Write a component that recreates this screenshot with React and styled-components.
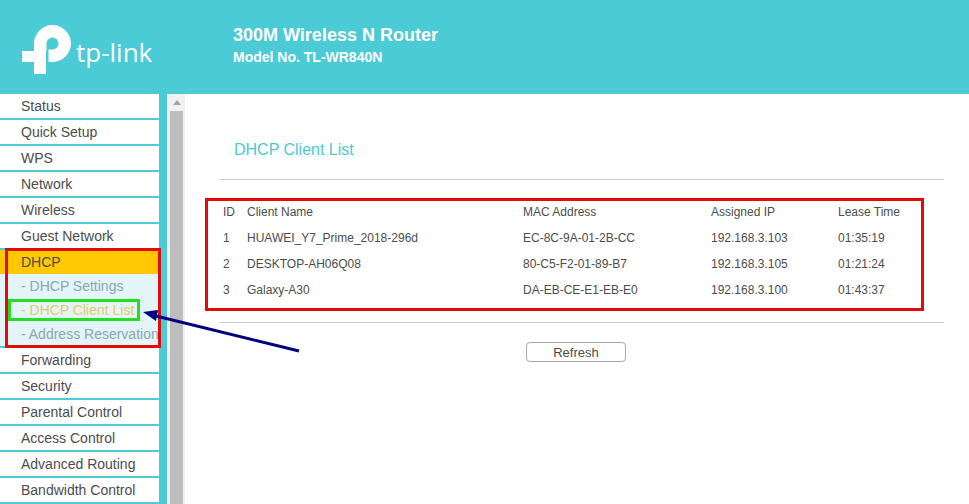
import React from 'react';
import styled, { createGlobalStyle } from 'styled-components';

const GlobalStyle = createGlobalStyle`
  html, body {
    margin: 0;
    height: 100%;
    overflow: hidden;
    background: #fff;
  }
  body {
    font-family: "Liberation Sans", Arial, sans-serif;
    color: #4c4c4c;
  }
`;

const Page = styled.div`
  position: relative;
  width: 969px;
  height: 504px;
  overflow: hidden;
`;

const Header = styled.header`
  height: 94px;
  background: #4acbd6;
  display: flex;
  color: #fff;
`;

const Brand = styled.div`
  width: 233px;
  padding: 25px 0 0 22px;
  box-sizing: border-box;
  display: flex;
  align-items: flex-start;
`;

const Wordmark = styled.span`
  font-family: "Open Sans", sans-serif;
  font-weight: 400;
  font-size: 26px;
  line-height: 30px;
  margin: 12px 0 0 4px;
`;

const Product = styled.div`
  padding-top: 24px;
  font-weight: bold;
`;

const ProductName = styled.div`
  font-size: 18px;
  line-height: 22px;
`;

const ModelNo = styled.div`
  font-size: 14px;
  line-height: 22px;
`;

const Body = styled.div`
  display: flex;
  height: 410px;
`;

const Menu = styled.nav`
  width: 159px;
  border-right: 8px solid #4acbd6;
  flex: none;
  background: #4acbd6;
`;

const MenuItem = styled.div`
  height: 24px;
  line-height: 24px;
  padding-left: 21px;
  font-size: 14px;
  background: ${p => (p.$open ? '#ffc800' : '#fff')};
  margin-bottom: ${p => (p.$open ? 0 : '2px')};
`;

const SubMenu = styled.div`
  background: #e3f5f8;
  margin-bottom: 2px;
`;

const SubItem = styled.div`
  height: 24px;
  line-height: 24px;
  padding-left: 21px;
  font-size: 14px;
  white-space: nowrap;
  overflow: hidden;
  color: ${p => (p.$active ? '#e2cc62' : '#8ba6ae')};
`;

const Scrollbar = styled.div`
  width: 17px;
  margin-left: 1px;
  flex: none;
  background: #f1f1f1;
  display: flex;
  flex-direction: column;
  align-items: center;
`;

const ScrollArrow = styled.div`
  height: 17px;
  width: 17px;
  display: flex;
  align-items: center;
  justify-content: center;
  &::before {
    content: '';
    border-left: 4px solid transparent;
    border-right: 4px solid transparent;
    border-bottom: 5px solid #a3a3a3;
  }
`;

const ScrollThumb = styled.div`
  width: 13px;
  flex: 1;
  background: #bdbdbd;
`;

const Content = styled.main`
  flex: 1;
  padding: 0 25px 0 34px;
`;

const Title = styled.h1`
  margin: 0;
  padding: 45px 0 0 15px;
  height: 40px;
  font-size: 16px;
  line-height: 22px;
  font-weight: normal;
  color: #4acbd6;
`;

const Rule = styled.hr`
  margin: 0;
  border: 0;
  height: 1px;
  background: #cccccc;
`;

const ClientTable = styled.table`
  border-collapse: collapse;
  table-layout: fixed;
  margin: 19px 0 19px 4px;
  width: 720px;
  font-size: 12px;
  th, td {
    height: 26px;
    padding: 0;
    font-weight: normal;
    text-align: left;
  }
`;

const Actions = styled.div`
  padding: 19px 0 0 307px;
`;

const RefreshButton = styled.button`
  display: block;
  width: 100px;
  height: 20px;
  padding: 0;
  background: #fff;
  border: 1px solid #a8a8a8;
  border-radius: 4px;
  font-family: inherit;
  font-size: 13px;
  color: #4c4c4c;
`;

const Callout = styled.div`
  position: absolute;
  box-sizing: border-box;
  left: ${p => p.$x}px;
  top: ${p => p.$y}px;
  width: ${p => p.$w}px;
  height: ${p => p.$h}px;
  border: 3px solid ${p => p.$color};
`;

const ArrowLayer = styled.svg`
  position: absolute;
  left: 0;
  top: 0;
`;

const menuTop = ['Status', 'Quick Setup', 'WPS', 'Network', 'Wireless', 'Guest Network'];
const menuBottom = ['Forwarding', 'Security', 'Parental Control', 'Access Control', 'Advanced Routing', 'Bandwidth Control'];

const clients = [
  ['1', 'HUAWEI_Y7_Prime_2018-296d', 'EC-8C-9A-01-2B-CC', '192.168.3.103', '01:35:19'],
  ['2', 'DESKTOP-AH06Q08', '80-C5-F2-01-89-B7', '192.168.3.105', '01:21:24'],
  ['3', 'Galaxy-A30', 'DA-EB-CE-E1-EB-E0', '192.168.3.100', '01:43:37'],
];

const Logo = () => (
  <svg width="50" height="50" viewBox="0 0 50 50" fill="#fff">
    <path d="M12 18.5A18.5 18.5 0 1 1 30.5 37H26.5V24.5H30.5a6 6 0 1 0-6-6V26H12z" />
    <path d="M0 26H24V49H12V37H0z" />
  </svg>
);

function App() {
  return (
    <Page>
      <GlobalStyle />
      <Header>
        <Brand>
          <Logo />
          <Wordmark>tp-link</Wordmark>
        </Brand>
        <Product>
          <ProductName>300M Wireless N Router</ProductName>
          <ModelNo>Model No. TL-WR840N</ModelNo>
        </Product>
      </Header>
      <Body>
        <Menu>
          {menuTop.map(name => <MenuItem key={name}>{name}</MenuItem>)}
          <MenuItem $open>DHCP</MenuItem>
          <SubMenu>
            <SubItem>- DHCP Settings</SubItem>
            <SubItem $active>- DHCP Client List</SubItem>
            <SubItem>- Address Reservation</SubItem>
          </SubMenu>
          {menuBottom.map(name => <MenuItem key={name}>{name}</MenuItem>)}
        </Menu>
        <Scrollbar>
          <ScrollArrow />
          <ScrollThumb />
        </Scrollbar>
        <Content>
          <Title>DHCP Client List</Title>
          <Rule />
          <ClientTable>
            <colgroup>
              <col width="24" />
              <col width="276" />
              <col width="188" />
              <col width="127" />
              <col />
            </colgroup>
            <thead>
              <tr>
                <th>ID</th>
                <th>Client Name</th>
                <th>MAC Address</th>
                <th>Assigned IP</th>
                <th>Lease Time</th>
              </tr>
            </thead>
            <tbody>
              {clients.map(row => (
                <tr key={row[0]}>
                  {row.map(cell => <td key={cell}>{cell}</td>)}
                </tr>
              ))}
            </tbody>
          </ClientTable>
          <Rule />
          <Actions>
            <RefreshButton>Refresh</RefreshButton>
          </Actions>
        </Content>
      </Body>
      <Callout $x={5} $y={248} $w={156} $h={100} $color="#e30a0a" />
      <Callout $x={205} $y={198} $w={719} $h={113} $color="#e30a0a" />
      <Callout $x={8} $y={299} $w={132} $h={22} $color="#22e01f" />
      <ArrowLayer width="969" height="504" viewBox="0 0 969 504">
        <path d="M299 351L156 316" stroke="#000080" strokeWidth="3" fill="none" />
        <path d="M143 312L158 310L156 321z" fill="#000080" />
      </ArrowLayer>
    </Page>
  );
}

export default App;
